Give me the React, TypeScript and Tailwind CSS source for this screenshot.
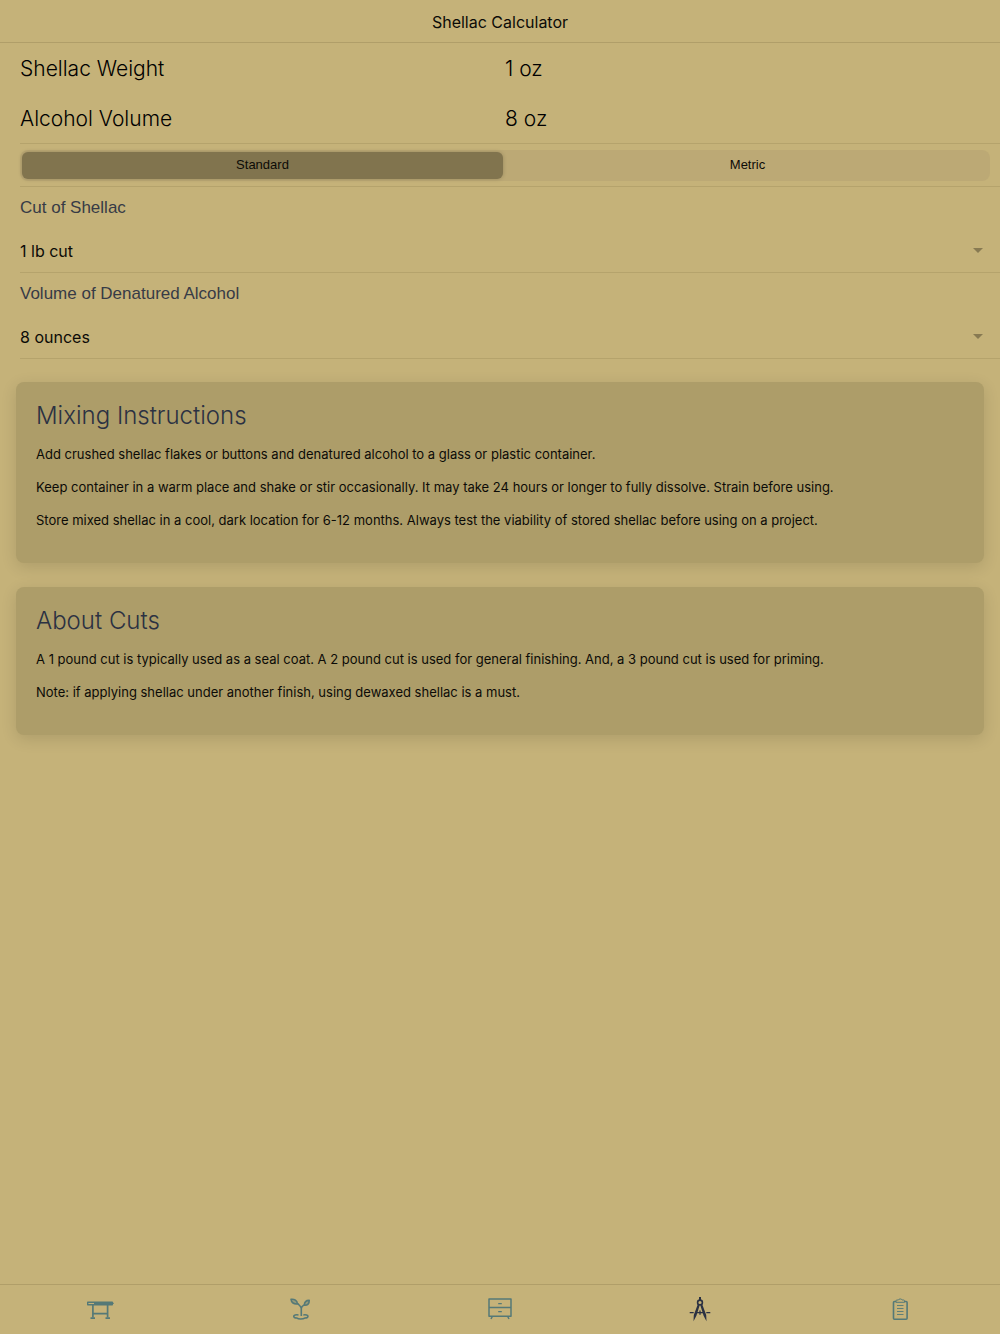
import { useState } from "react";
import type { ReactNode } from "react";

const tabs: { name: string; icon: ReactNode }[] = [
  {
    name: "Workbench",
    icon: (
      <>
        <path d="M7.700 12.200h24.600v2.500H7.700z" strokeWidth="1.400" />
        <path d="M14 12.200h18v2.500H14z" fill="currentColor" stroke="none" />
        <path d="M32.500 13.400h1.200" strokeWidth="1.200" />
        <path d="M12.900 15v12.500M27.600 15v12.500M13 23.700h14.500" strokeWidth="1.700" />
        <path d="M10.500 28.100H15M25.500 28.100H30" strokeWidth="1.900" />
      </>
    ),
  },
  {
    name: "Plants",
    icon: (
      <>
        <path d="M21.300 26V18.500M21.300 18.500c0-2-1.600-3-3.600-4.800M21.300 18.500c0-2 1.200-2.700 2.800-3.600" strokeWidth="1.600" />
        <path d="M11 9.300c3.400-.4 6.200 1.200 6.400 4.600-3.500.5-6.100-1.300-6.400-4.600zM29.200 10.400c.2 3.300-1.600 5-4.800 4.800-.1-3.200 1.600-4.800 4.800-4.800z" fill="currentColor" fillOpacity=".4" strokeWidth="1.600" />
        <path d="M18.500 24.900c-2.500-.3-4.800 0-4.800 1.400s1.800 1.800 3.300 1.800c1.200 1.200 6.200 1.200 7.700 0 1.500 0 3.300-.4 3.300-1.800s-2.200-1.700-4.700-1.400" strokeWidth="1.500" />
      </>
    ),
  },
  {
    name: "Projects",
    icon: (
      <>
        <path d="M9 9h22v17.300H9zM9 17.500h22M12.300 26.500l-1.300 2.500M27.700 26.500l1.300 2.500" strokeWidth="1.500" />
        <path d="M18.200 13.600h3.600M18.200 21.600h3.600" strokeWidth="1.300" />
      </>
    ),
  },
  {
    name: "Calculators",
    icon: (
      <>
        <path d="M20 7v3" strokeWidth="2" />
        <circle cx="20" cy="12.500" r="2.400" strokeWidth="1.600" />
        <path d="M17.800 14.200l1.800 1.200-3.200 10.400-2.900 5.400.3-6.200zM22.200 14.200l-1.800 1.200 3.200 10.400 2.900 5.400-.3-6.200z" fill="currentColor" stroke="none" />
        <path d="M9.700 22.700h4M16 22.700h8M26.300 22.700h4M20 20.500v4.300" strokeWidth="1.300" />
      </>
    ),
  },
  {
    name: "Notes",
    icon: (
      <>
        <path d="M16 11.500h-1.500c-.6 0-1 .4-1 1v15.700c0 .6.400 1 1 1h11.600c.6 0 1-.4 1-1V12.500c0-.6-.4-1-1-1h-1.500" strokeWidth="1.600" />
        <path d="M16 12.300v-1.500c0-.5.400-.8.900-.8h1.500c.2-1.400 3.500-1.400 3.700 0h1.500c.5 0 .9.300.9.800v1.500z" strokeWidth="1" />
        <path d="M17 15.500h6.500M17 18.500h6.500M17 21.500h6.500M17 24.500h6.500" strokeWidth=".9" />
      </>
    ),
  },
];

const units = ["Standard", "Metric"];

const cards = [
  {
    title: "Mixing Instructions",
    lines: [
      "Add crushed shellac flakes or buttons and denatured alcohol to a glass or plastic container.",
      "Keep container in a warm place and shake or stir occasionally. It may take 24 hours or longer to fully dissolve. Strain before using.",
      "Store mixed shellac in a cool, dark location for 6-12 months. Always test the viability of stored shellac before using on a project.",
    ],
  },
  {
    title: "About Cuts",
    lines: [
      "A 1 pound cut is typically used as a seal coat. A 2 pound cut is used for general finishing. And, a 3 pound cut is used for priming.",
      "Note: if applying shellac under another finish, using dewaxed shellac is a must.",
    ],
  },
];

const SelectRow = ({ id, label, options }: { id: string; label: string; options: string[] }) => (
  <div className="flex flex-col border-b border-[#b5a36c] pt-[9px]">
    <label htmlFor={id} className="font-['Liberation_Sans',sans-serif] text-[17px] leading-6 text-[#373b46]">
      {label}
    </label>
    <div className="mt-3 grid items-center pr-[17px]">
      <select id={id} className="col-start-1 row-start-1 h-10 w-full appearance-none bg-transparent pb-0.5 text-base outline-none">
        {options.map((option) => (
          <option key={option}>{option}</option>
        ))}
      </select>
      <svg viewBox="0 0 10 5" className="pointer-events-none col-start-1 row-start-1 mb-1 h-[5px] w-[10px] justify-self-end fill-[#887a52]">
        <path d="M0 0h10L5 5z" />
      </svg>
    </div>
  </div>
);

const App = () => {
  const [unit, setUnit] = useState("Standard");
  const [tab, setTab] = useState("Calculators");

  return (
    <div className="flex min-h-screen flex-col bg-[#c5b279] font-[Inter,sans-serif] text-[#0c0b07]">
      <header className="border-b border-[#b09e69] pt-2.5 pb-2 text-center">
        <h1 className="text-base leading-6">Shellac Calculator</h1>
      </header>

      <main className="grow">
        <div className="pl-5">
          <dl className="border-b border-[#b5a36c] text-[21px] font-light leading-[48px] text-black">
            <div className="grid grid-cols-2 pt-0.5 pr-2.5">
              <dt>Shellac Weight</dt>
              <dd>1 oz</dd>
            </div>
            <div className="grid grid-cols-2 pt-0.5 pr-2.5">
              <dt>Alcohol Volume</dt>
              <dd>8 oz</dd>
            </div>
          </dl>

          <div className="border-b border-[#b5a36c] pt-1.5 pr-2.5 pb-[5px]">
            <div className="grid grid-cols-2 rounded-lg bg-[#bca975] font-['Liberation_Sans',sans-serif] text-[13px]">
              {units.map((name) => (
                <button
                  key={name}
                  type="button"
                  aria-pressed={unit === name}
                  onClick={() => setUnit(name)}
                  className={
                    unit === name
                      ? "m-0.5 h-[27px] rounded-md bg-[#81744e] pb-0.5 shadow-[0_0_4px_rgba(0,0,0,0.2)]"
                      : "m-0.5 h-[27px] rounded-md pb-0.5"
                  }
                >
                  {name}
                </button>
              ))}
            </div>
          </div>

          <SelectRow id="cut" label="Cut of Shellac" options={["1 lb cut", "2 lb cut", "3 lb cut"]} />
          <SelectRow id="volume" label="Volume of Denatured Alcohol" options={["8 ounces", "16 ounces", "32 ounces"]} />
        </div>

        <div className="flex flex-col gap-6 px-4 pt-[23px] pb-6">
          {cards.map((card) => (
            <section key={card.title} className="rounded-lg bg-[#ad9d69] p-5 shadow-[0_4px_16px_rgba(0,0,0,0.12)]">
              <h2 className="mb-3.5 text-2xl font-light leading-7 text-[#2b3142]">{card.title}</h2>
              {card.lines.map((line) => (
                <p key={line} className="mb-[13px] text-[13px] leading-5">
                  {line}
                </p>
              ))}
            </section>
          ))}
        </div>
      </main>

      <nav className="grid grid-cols-5 border-t border-[#b09e69]">
        {tabs.map(({ name, icon }) => (
          <button
            key={name}
            type="button"
            aria-label={name}
            onClick={() => setTab(name)}
            className={
              tab === name
                ? "flex h-[49px] items-center justify-center text-[#2b3142]"
                : "flex h-[49px] items-center justify-center text-[#557977]"
            }
          >
            <svg viewBox="0 0 40 40" className="size-10" fill="none" stroke="currentColor" strokeLinejoin="round">
              {icon}
            </svg>
          </button>
        ))}
      </nav>
    </div>
  );
};

export default App;
